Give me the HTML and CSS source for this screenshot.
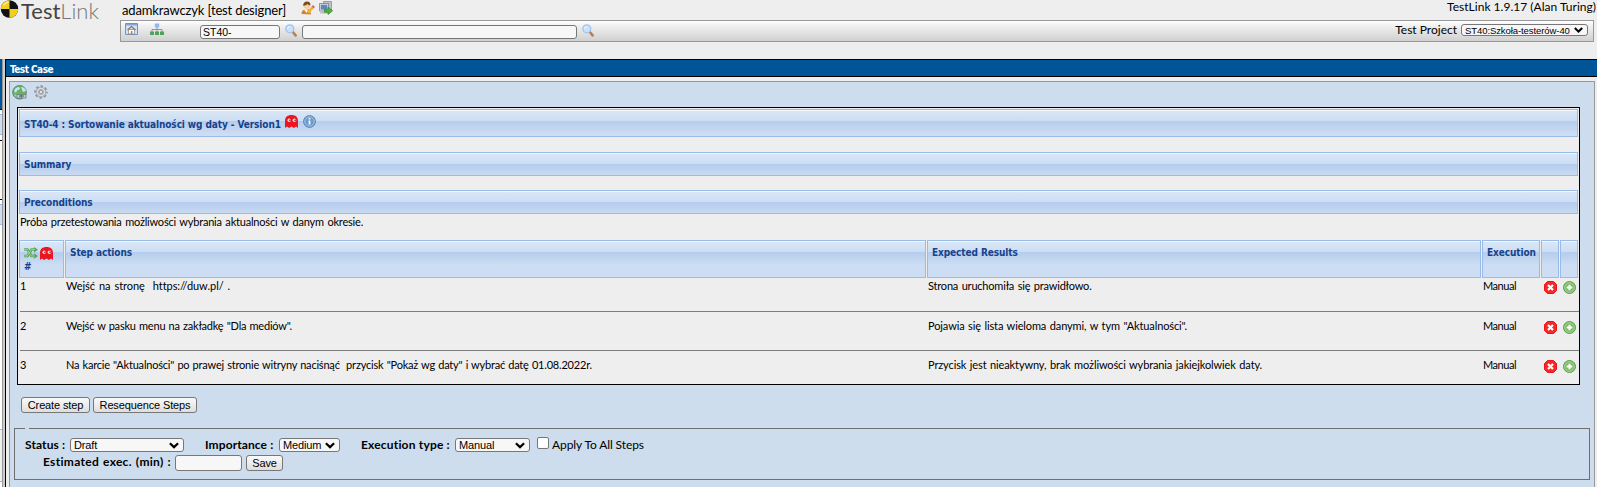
FILE: index.html
```
<!DOCTYPE html>
<html lang="pl">
<head>
<meta charset="utf-8">
<title>TestLink</title>
<link rel="stylesheet" href="styles.css">
</head>
<body>
<svg class="defs" width="0" height="0" aria-hidden="true">
  <symbol id="ghost" viewBox="0 0 13 13"><path fill="#ed1520" d="M0 13V6C0 2 2.500 0 6.500 0S13 2 13 6v7l-2-1.600L9 13l-2.500-1.600L4 13l-2-1.600z"/><ellipse cx="4.200" cy="5.200" rx="1.700" ry="1.700" fill="#f6dede"/><ellipse cx="9.400" cy="5.200" rx="1.700" ry="1.700" fill="#f6dede"/><path fill="#933" d="M4.200 4.500h1.500V6H4.200zM9.400 4.500h1.500V6H9.400z"/></symbol>
  <symbol id="search" viewBox="0 0 12 13"><path d="M8 8.200l2.600 3.200" stroke="#bb8052" stroke-width="2.600" stroke-linecap="round"/><circle cx="4.800" cy="4.800" r="4" fill="#c9e1fb" stroke="#a4c3ec" stroke-width="1.300"/><path d="M2.600 4.600a2.300 2.300 0 0 1 2-2" stroke="#fff" fill="none"/></symbol>
  <symbol id="del" viewBox="0 0 13 13"><path fill="#f3282b" stroke="#f01316" d="M3.500.5h6L12.500 3.500v6L9.500 12.500h-6L.5 9.500v-6z"/><path d="M4 4l5 5M9 4L4 9" stroke="#fff" stroke-width="2.200"/></symbol>
  <symbol id="add" viewBox="0 0 13 13"><circle cx="6.500" cy="6.500" r="6" fill="#7dbb68" stroke="#5a9d4b"/><circle cx="6.500" cy="6.500" r="4.800" fill="none" stroke="#b3dca4" stroke-width=".8"/><path d="M6.500 3.700v5.600M3.700 6.500h5.600" stroke="#fff" stroke-width="2"/></symbol>
</svg>

<header class="top">
  <div class="logo">
    <svg width="19" height="19" viewBox="0 0 19 19"><circle cx="9.500" cy="9" r="8.700" fill="#111"/><path fill="#f2cf1c" d="M9.500 9V.3A8.700 8.700 0 0 0 .8 9zM9.500 9v8.700A8.700 8.700 0 0 0 18.200 9z"/><path d="M3.500 5.500a7 7 0 0 1 5-3.500" stroke="#fbef9a" stroke-width="1.500" fill="none"/></svg>
    <span class="brand"><span class="brand-a">Test</span><span class="brand-b">Link</span></span>
  </div>
  <div class="main">
    <div class="userline">
      <span class="user"><span class="f-user">adamkrawczyk [test designer]</span>
        <svg class="ico-user" width="14" height="14" viewBox="0 0 14 14"><path fill="#d9822b" d="M.5 13c0-3 1.500-4.500 4-4.500L9 8l1 5.500z"/><path fill="#fff" d="M3 8.500h4L5.500 12z"/><circle cx="5.800" cy="4.600" r="3.300" fill="#f5cf9f"/><path fill="#7d4a22" d="M2.300 5C2 2 3.500.5 6 .5S9.600 2 9.400 4.500C8 4.300 7 3.800 6.400 3 5.500 4 4 4.400 2.300 5z"/><path d="M7 11.500l5.500-6" stroke="#f0b52c" stroke-width="2.600"/><path d="M11.600 6.500l1.400-1.500" stroke="#d66" stroke-width="2.600"/></svg>
        <svg class="ico-out" width="14" height="14" viewBox="0 0 14 14"><path fill="#b9bfc4" stroke="#8d9499" stroke-width=".8" d="M4.500.5h8v9h-8z"/><path fill="#d5dade" stroke="#7d858c" stroke-width=".8" d="M.5 2.500h9v7.500h-9z"/><path fill="#5d87bd" d="M1.800 3.800h6.400v4.800H1.800z"/><path fill="#b5bbc0" d="M3 10h4v1.300h2v1.200H1v-1.200h2z"/><path fill="#4fae3c" stroke="#34862a" stroke-width=".7" d="M5.500 8.300H9V6l4.600 3.800L9 13.600v-2.300H5.500z"/></svg>
      </span>
      <span class="f-version">TestLink 1.9.17 (Alan Turing)</span>
    </div>
    <div class="menubar">
      <svg class="ico-home" width="13" height="12" viewBox="0 0 13 12"><path fill="#cfe3f8" stroke="#6e93c8" d="M.5.5h12v11H.5z"/><path fill="#82a7d9" d="M1 1h11v1.500H1z"/><path fill="#fff" stroke="#a08a78" stroke-width=".8" d="M3.500 6.500h6v4.500h-6z"/><path d="M2.500 7l4-3.500 4 3.500" fill="none" stroke="#9a7058" stroke-width="1.200"/><path fill="#c07a4b" d="M5.800 8h1.600v3H5.800z"/></svg>
      <svg class="ico-tree" width="14" height="13" viewBox="0 0 14 13"><path d="M7 4v5M2 9V6.500h10V9" fill="none" stroke="#8a9a92"/><path fill="#8fb8ec" d="M4.800.5h4.400v3.800H4.800z"/><path fill="#4ea35d" d="M0 8.500h4V12H0zM5 8.500h4V12H5zM10 8.500h4V12h-4z"/></svg>
      <input class="in-id" value="ST40-" aria-label="Test case id">
      <svg class="ico-s1" width="12" height="13"><use href="#search"/></svg>
      <input class="in-full" aria-label="Search">
      <svg class="ico-s2" width="12" height="13"><use href="#search"/></svg>
      <span class="f-project">Test Project</span>
      <span class="select sel-project"><span class="f-sel">ST40:Szkoła-testerów-40</span><svg width="9" height="6" viewBox="0 0 9 6"><path d="M.8 1l3.700 3.500L8.200 1" fill="none" stroke="#000" stroke-width="2"/></svg></span>
    </div>
  </div>
</header>

<div class="frames">
  <aside class="tree-edge"><i class="edge-title"></i><i class="edge-bar"></i><i class="edge-box"></i><i class="edge-bar low"></i><i class="edge-rest"></i><i class="edge-foot"></i></aside>
  <div class="splitter"></div>
  <main class="workframe">
    <h1 class="title"><span class="f-title">Test Case</span></h1>
    <section class="panel">
      <div class="tools">
        <svg width="16" height="15" viewBox="0 0 16 15"><circle cx="7.500" cy="7.300" r="6.800" fill="#68b45b" stroke="#5b8a74"/><path fill="#c2e6ef" d="M2 6c1-3 3-4 5-4l1 2-3 1.500L4 8zM9 2c3 0 4.500 2 5 4l-3 1z"/><path fill="#8ecfe8" d="M2 9l3 1 1 3c-2-.5-3.500-2-4-4z"/><path fill="#c9ced2" stroke="#717a80" stroke-width=".8" d="M5 9.500h4v3.500H5zM9.500 9.500h4.500v3.500H9.500z"/><path d="M7 11h5" stroke="#555"/></svg>
        <svg width="14" height="14" viewBox="0 0 14 14"><circle cx="7" cy="7" r="5.700" fill="none" stroke="#8d9195" stroke-width="2" stroke-dasharray="2.500 1.980" stroke-dashoffset="1.250"/><circle cx="7" cy="7" r="3.700" fill="none" stroke="#a9adb1" stroke-width="3"/><circle cx="7" cy="7" r="3.600" fill="none" stroke="#dadddf" stroke-width="1.300"/><circle cx="7" cy="7" r="1.800" fill="#d6e3ef" stroke="#85898d" stroke-width=".8"/></svg>
      </div>

      <article class="case">
        <h2 class="bar bar-name"><span class="f-head">ST40-4 : Sortowanie aktualności wg daty - Version1</span>
          <svg class="ico-g" width="13" height="13"><use href="#ghost"/></svg>
          <svg class="ico-i" width="13" height="13" viewBox="0 0 13 13"><circle cx="6.500" cy="6.500" r="5.900" fill="#6f9bcb" stroke="#5682b4"/><circle cx="6.500" cy="6.500" r="4.700" fill="none" stroke="#b5cfeb" stroke-width=".8"/><path d="M6.500 5.600v4M6.500 3v1.600" stroke="#fff" stroke-width="1.700"/></svg>
        </h2>
        <h2 class="bar bar-summary"><span class="f-head">Summary</span></h2>
        <h2 class="bar bar-pre"><span class="f-head">Preconditions</span></h2>
        <p class="pretext"><span class="f-body roomy">Próba przetestowania możliwości wybrania aktualności w danym okresie.</span></p>

        <div class="steps head">
          <div class="bar cell num"><span class="pair"><svg width="14" height="12" viewBox="0 0 14 12"><path d="M0 2.500h3.500l4 6.500H11M0 9h3.500l4-6.500H11" fill="none" stroke="#58a65c" stroke-width="2.600"/><path fill="#58a65c" d="M10 0l4 2.700-4 2.800zM10 6.300L14 9l-4 2.800z"/><path d="M0 2.500h3.300l4 6.500H11M0 9h3.300l4-6.500H11" fill="none" stroke="#a9dba3" stroke-width=".8"/></svg><svg width="13" height="13"><use href="#ghost"/></svg></span><span class="f-head">#</span></div>
          <div class="bar cell"><span class="f-head">Step actions</span></div>
          <div class="bar cell"><span class="f-head">Expected Results</span></div>
          <div class="bar cell"><span class="f-head">Execution</span></div>
          <div class="bar cell"></div>
          <div class="bar cell"></div>
        </div>
        <div class="steps row r1">
          <span class="f-body">1</span><span class="f-body widest">Wejść na stronę &nbsp;https://duw.pl/ .</span><span class="f-body roomy">Strona uruchomiła się prawidłowo.</span><span class="f-body tight">Manual</span>
          <svg width="13" height="13"><use href="#del"/></svg><svg width="13" height="13"><use href="#add"/></svg>
        </div>
        <div class="steps row r2">
          <span class="f-body">2</span><span class="f-body">Wejść w pasku menu na zakładkę "Dla mediów".</span><span class="f-body wide">Pojawia się lista wieloma danymi, w tym "Aktualności".</span><span class="f-body tight">Manual</span>
          <svg width="13" height="13"><use href="#del"/></svg><svg width="13" height="13"><use href="#add"/></svg>
        </div>
        <div class="steps row r3">
          <span class="f-body">3</span><span class="f-body">Na karcie "Aktualności" po prawej stronie witryny naciśnąć &nbsp;przycisk "Pokaż wg daty" i wybrać datę 01.08.2022r.</span><span class="f-body wide">Przycisk jest nieaktywny, brak możliwości wybrania jakiejkolwiek daty.</span><span class="f-body tight">Manual</span>
          <svg width="13" height="13"><use href="#del"/></svg><svg width="13" height="13"><use href="#add"/></svg>
        </div>
      </article>

      <div class="actions"><button class="b-create">Create step</button><button class="b-reseq">Resequence Steps</button></div>

      <div class="attrs">
        <div class="line">
          <span class="f-label l-status">Status :</span><span class="select s-status"><span>Draft</span><svg width="10" height="7" viewBox="0 0 9 6"><path d="M.8 1l3.700 3.500L8.200 1" fill="none" stroke="#000" stroke-width="2"/></svg></span>
          <span class="f-label l-imp">Importance :</span><span class="select s-imp"><span>Medium</span><svg width="10" height="7" viewBox="0 0 9 6"><path d="M.8 1l3.700 3.500L8.200 1" fill="none" stroke="#000" stroke-width="2"/></svg></span>
          <span class="f-label l-exec">Execution type :</span><span class="select s-exec"><span>Manual</span><svg width="10" height="7" viewBox="0 0 9 6"><path d="M.8 1l3.700 3.500L8.200 1" fill="none" stroke="#000" stroke-width="2"/></svg></span>
          <span class="check"></span><span class="f-apply">Apply To All Steps</span>
        </div>
        <div class="line second">
          <span class="f-label l-est">Estimated exec. (min) :</span><input class="in-min" aria-label="Estimated exec."><button class="b-save">Save</button>
        </div>
      </div>
    </section>
  </main>
</div>
</body>
</html>
```
FILE: styles.css
```
* { box-sizing: border-box; }
html, body { margin: 0; height: 487px; overflow: hidden; }
body { background: #eee; color: #000; font-family: Lato, "Open Sans", sans-serif; font-size: 11px; line-height: 14px; }
.defs { position: absolute; }
svg { display: block; flex: none; }
h1, h2, p { margin: 0; font-size: inherit; }
span { white-space: pre; }

.f-user { font-size: 13px; letter-spacing: -.15px; }
.f-version { font-size: 12px; letter-spacing: .02px; }
.f-project { font-size: 12px; }
.f-sel { letter-spacing: -.08px; }
.f-title { font-family: "DejaVu Sans Condensed", sans-serif; font-weight: bold; font-size: 10px; letter-spacing: -.53px; }
.f-head { font-family: "DejaVu Sans Condensed", sans-serif; font-weight: bold; font-size: 10px; letter-spacing: -.1px; color: #15428b; }
.f-body { letter-spacing: -.2px; word-spacing: .6px; }
.f-body.roomy { word-spacing: .95px; }
.f-body.wide { letter-spacing: -.12px; word-spacing: .85px; }
.f-body.widest { letter-spacing: -.05px; word-spacing: 1.2px; }
.f-body.tight { letter-spacing: -.45px; }
.f-label { font-weight: bold; font-size: 12px; letter-spacing: .1px; }
.f-apply { font-size: 12px; letter-spacing: -.1px; }

.top { display: flex; height: 59px; }
.logo { display: flex; width: 120px; }
.brand { font-size: 22px; line-height: 27px; height: 27px; margin: -3px 0 0 2px; color: #444; }
.brand-a, .brand-b { display: inline-block; line-height: 27px; }
.brand-b { font-weight: 300; color: #777; }
.main { flex: 1; padding-right: 3px; }
.userline { display: flex; justify-content: space-between; height: 20px; margin-right: -2px; padding-left: 2px; }
.user { display: flex; padding-top: 3px; }
.ico-user { margin: -2px 0 0 15px; }
.ico-out { margin: -2px 0 0 4px; }
.menubar { display: flex; align-items: flex-start; height: 22px; border: 1px solid #999; background: linear-gradient(#fff, #f0f0f0 25%, #d0d0d0); }
.ico-home { margin: 2px 0 0 4px; }
.ico-tree { margin: 2px 0 0 12px; }
input { border: 1px solid #777; border-radius: 3px; background: #f7f7f7; padding: 0 2px; font: 10.500px "Liberation Sans", sans-serif; margin: 0; }
.in-id { width: 80px; height: 14px; margin: 4px 0 0 36px; }
.ico-s1 { margin: 3px 0 0 5px; }
.in-full { width: 275px; height: 14px; margin: 4px 0 0 5px; }
.ico-s2 { margin: 3px 0 0 5px; }
.f-project { margin: 2px 4px 0 auto; }
.select { display: flex; align-items: center; justify-content: space-between; border: 1px solid #777; border-radius: 3px; background: #f7f7f7; padding: 0 4px 0 3px; font: 11px/11px "Liberation Sans", sans-serif; letter-spacing: -.12px; }
.sel-project { width: 127px; height: 12px; margin: 3px 5px 0 0; font-size: 9.500px; }

.frames { display: flex; height: 428px; }
.tree-edge { width: 2px; display: flex; flex-direction: column; background: #fff; }
.edge-title { height: 51px; background: #059; border-bottom: 1px solid #000; }
.edge-bar { height: 21px; margin: 4px 0 5px; background: #cdddf3; border: solid #99bbe8; border-width: 1px 0; }
.edge-box { height: 60px; background: #fdf6ea; border: solid #000; border-width: 1px 0; }
.edge-rest { flex: 1; }
.edge-foot { height: 53px; margin-bottom: 5px; background: #eee; border: solid #99bbe8; border-width: 1px 0; }
.splitter { width: 3px; background: #ccc; border-left: 1px solid #999; }
.workframe { flex: 1; border-left: 1px solid #000; }
.title { height: 18px; background: #059; color: #fff; border: solid #000; border-width: 1px 0; padding-left: 4px; line-height: 17px; }
.panel { height: 420px; margin: 4px 2px 0 3px; border: solid #999; border-width: 1px 1px 0; background: #cddded; }
.tools { display: flex; gap: 6px; height: 25px; padding: 3px 0 0 2px; }
.case { width: 1563px; height: 278px; margin-left: 7px; border: 1px solid #000; background: #eee; padding: 1px; }
.bar { border: 1px solid #99bbe8; box-shadow: inset 0 1px #f4f8fd; background: linear-gradient(#dae7f6, #cddef3 11px, #b4ccee 11px, #cdddf3 24px); padding-left: 4px; display: flex; }
h2.bar { width: 1559px; }
.bar-name { height: 28px; padding-top: 8px; }
.ico-g { margin: -3px 0 0 4px; }
.ico-i { margin: -3px 0 0 5px; }
.bar-summary { height: 24px; margin-top: 15px; padding-top: 5px; }
.bar-pre { height: 24px; margin-top: 14px; padding-top: 5px; }
.pretext { height: 26px; padding: 1px 0 0 1px; }
.steps { display: grid; grid-template-columns: 45px 861px 554px 58px 18px 18px; column-gap: 1px; }
.head { height: 38px; }
.cell { padding-top: 5px; }
.num { flex-direction: column; padding-top: 6px; }
.pair { display: flex; gap: 2px; height: 13px; }
.row { margin-left: 1px; width: 1559px; border-bottom: 1px solid #7d7d7d; }
.r1 { height: 34px; padding-top: 1px; }
.r2 { height: 39px; padding-top: 7px; }
.r3 { height: 33px; padding-top: 7px; border-bottom: 0; }
.row svg { margin: 2px 0 0 2px; }
.actions { display: flex; gap: 3px; padding: 12px 0 0 11px; }
button { border: 1px solid #777; border-radius: 3px; background: linear-gradient(#fafafa, #dedede); padding: 0; font: 11px/13px "Liberation Sans", sans-serif; letter-spacing: -.13px; color: #000; }
.b-create { width: 69px; height: 16px; }
.b-reseq { width: 104px; height: 16px; }
.attrs { position: relative; width: 1576px; height: 52px; margin: 15px 0 0 4px; border: 1px solid #6f6f6f; padding: 9px 0 0 10px; }
.attrs::before { content: ""; position: absolute; left: 10px; top: -1px; width: 4px; height: 1px; background: #cddded; }
.line { display: flex; align-items: flex-start; height: 17px; }
.line .select { height: 14px; }
.l-status { width: 45px; }
.s-status { width: 114px; }
.l-imp { width: 74px; margin-left: 21px; }
.s-imp { width: 61px; }
.l-exec { width: 94px; margin-left: 21px; letter-spacing: .18px; }
.s-exec { width: 75px; }
.check { width: 12px; height: 12px; margin: -1px 3px 0 7px; border: 1px solid #767676; border-radius: 2px; background: #fff; }
.l-est { width: 132px; margin-left: 18px; letter-spacing: .3px; word-spacing: .8px; }
.in-min { width: 67px; height: 16px; }
.b-save { width: 37px; height: 16px; margin-left: 4px; }
```
